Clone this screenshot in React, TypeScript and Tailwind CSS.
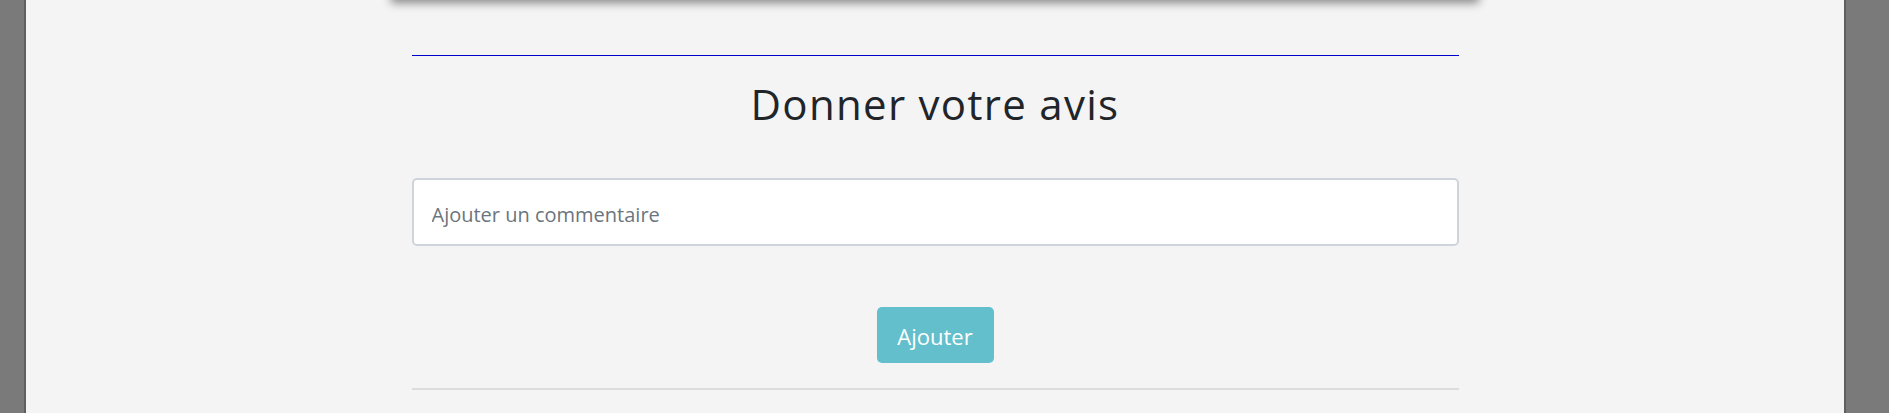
export default function App() {
  return (
    <div className="h-[413px] w-full overflow-hidden bg-[#797a79] pl-[24px] pr-[43px]">
      <div className="flex h-full flex-col items-center border-x-2 border-[#5f5f5f] bg-[#f4f4f4]">
        {/* card above, only its shadow shows */}
        <div className="-mt-[20px] h-[20px] w-[1088px] bg-[#f4f4f4] shadow-[0_3px_10px_rgba(0,0,0,0.45)]" />

        <div className="mt-[55px] flex w-[1047px] flex-col items-center">
          <div className="h-px w-full bg-[#0000cc]" />

          <h2 className="mt-[24px] text-[42px] leading-[48px] tracking-[1.3px] font-normal text-[#212529] [font-family:'Open_Sans',sans-serif]">
            Donner votre avis
          </h2>

          <input
            type="text"
            placeholder="Ajouter un commentaire"
            className="mt-[50px] h-[68px] w-full rounded-[5px] border-2 border-[#ced4da] bg-white px-[18px] pt-[4px] text-[20px] text-[#495057] placeholder:text-[#6c757d] [font-family:'Open_Sans',sans-serif] outline-none"
          />

          <button className="mt-[61px] h-[56px] w-[117px] rounded-[5px] bg-[#63bfcc] pt-[3px] text-[22px] text-white [font-family:'Open_Sans',sans-serif]">
            Ajouter
          </button>

          <div className="mt-[25px] h-[2px] w-full bg-[#dcdcdc]" />
        </div>
      </div>
    </div>
  );
}
